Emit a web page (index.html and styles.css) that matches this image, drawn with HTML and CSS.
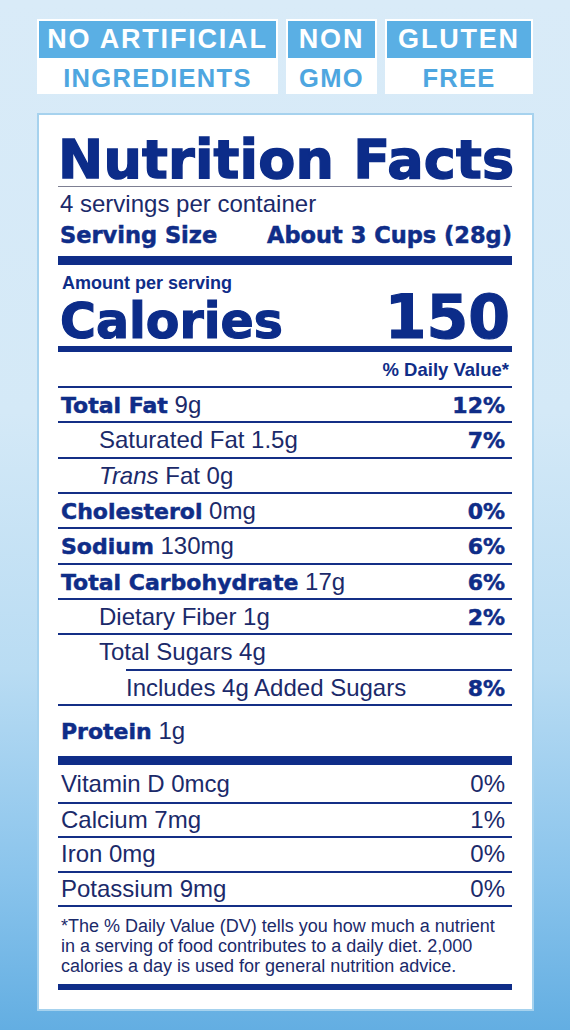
FILE: index.html
```html
<!DOCTYPE html>
<html lang="en">
<head>
<meta charset="utf-8">
<title>Nutrition Facts</title>
<link rel="stylesheet" href="styles.css">
</head>
<body>
<div class="page">
  <div class="badges">
    <div class="badge b1"><div class="b-top">NO ARTIFICIAL</div><div class="b-bot">INGREDIENTS</div></div>
    <div class="badge b2"><div class="b-top">NON</div><div class="b-bot">GMO</div></div>
    <div class="badge b3"><div class="b-top">GLUTEN</div><div class="b-bot">FREE</div></div>
  </div>

  <div class="card">
    <div class="title">Nutrition Facts</div>
    <div class="rule-thin"></div>
    <div class="servings">4 servings per container</div>
    <div class="serving-size"><span>Serving Size</span><span>About 3 Cups (28g)</span></div>
    <div class="bar bar-9"></div>
    <div class="amount">Amount per serving</div>
    <div class="calories"><span class="cal-lbl">Calories</span><span class="cal-num">150</span></div>
    <div class="bar bar-6"></div>
    <div class="dv">% Daily Value*</div>

    <div class="row"><span><b>Total Fat</b> 9g</span><b>12%</b></div>
    <div class="row sub"><span>Saturated Fat 1.5g</span><b>7%</b></div>
    <div class="row sub"><span><i>Trans</i> Fat 0g</span></div>
    <div class="row"><span><b>Cholesterol</b> 0mg</span><b>0%</b></div>
    <div class="row"><span><b>Sodium</b> 130mg</span><b>6%</b></div>
    <div class="row"><span><b>Total Carbohydrate</b> 17g</span><b>6%</b></div>
    <div class="row sub"><span>Dietary Fiber 1g</span><b>2%</b></div>
    <div class="row sub"><span>Total Sugars 4g</span></div>
    <div class="row sub2"><span>Includes 4g Added Sugars</span><b>8%</b></div>
    <div class="row protein"><span><b>Protein</b> 1g</span></div>
    <div class="bar bar-9 after-protein"></div>

    <div class="vrow first"><span>Vitamin D 0mcg</span><span>0%</span></div>
    <div class="vrow"><span>Calcium 7mg</span><span>1%</span></div>
    <div class="vrow"><span>Iron 0mg</span><span>0%</span></div>
    <div class="vrow"><span>Potassium 9mg</span><span>0%</span></div>

    <p class="foot">*The % Daily Value (DV) tells you how much a nutrient<br>in a serving of food contributes to a daily diet. 2,000<br>calories a day is used for general nutrition advice.</p>
    <div class="bar bar-6 last"></div>
  </div>
</div>
</body>
</html>
```

FILE: styles.css
```css
html, body {
  margin: 0;
  padding: 0;
}
body {
  width: 570px;
  height: 1030px;
  overflow: hidden;
  background: linear-gradient(to bottom, #d9ebf8 0%, #d4e9f7 40%, #b9dcf3 65%, #8ac4ec 85%, #63aee2 100%);
  font-family: "Liberation Sans", Arial, sans-serif;
}
.page {
  padding: 19px 0 0 37px;
}

/* Badges */
.badges {
  display: flex;
  gap: 8px;
}
.badge {
  background: #ffffff;
  padding: 2px 2px 1px;
  font-family: "Liberation Sans", Arial, sans-serif;
  font-weight: 700;
  text-align: center;
}
.b1 { width: 237px; }
.b2 { width: 87px; }
.b3 { width: 144px; }
.b-top {
  background: #5aafe4;
  color: #ffffff;
  height: 37px;
  line-height: 36px;
  font-size: 27px;
  letter-spacing: 1.8px;
  white-space: nowrap;
}
.b-bot {
  color: #4ea6e0;
  height: 30px;
  padding-top: 5px;
  line-height: 30px;
  font-size: 25.5px;
  letter-spacing: 1.3px;
  white-space: nowrap;
}

/* Card */
.card {
  margin-top: 19px;
  width: 454px;
  border: 2px solid #a6d2ee;
  background: #ffffff;
  padding: 19px 20px 19px 19px;
  color: #142f86;
}
.title {
  font-family: "DejaVu Sans", sans-serif;
  font-weight: 700;
  font-size: 54px;
  line-height: 52px;
  letter-spacing: 0.2px;
  color: #0c2c89;
  -webkit-text-stroke: 1.4px #0c2c89;
  white-space: nowrap;
}
.rule-thin {
  height: 1px;
  background: #7d7f92;
}
.servings {
  margin-top: 4px;
  font-size: 24px;
  line-height: 26px;
  color: #1b2a6a;
  padding-left: 2px;
}
.serving-size {
  margin-top: 5px;
  display: flex;
  justify-content: space-between;
  font-family: "DejaVu Sans", sans-serif;
  font-weight: 700;
  font-size: 22.5px;
  line-height: 26px;
  padding-left: 2px;
  color: #0f2d88;
  -webkit-text-stroke: 0.5px #0f2d88;
}
.bar {
  background: #0f2d88;
}
.bar-9 { height: 9px; margin-top: 8px; }
.bar-6 { height: 6px; }
.amount {
  margin-top: 8px;
  font-weight: 700;
  font-size: 18px;
  line-height: 20px;
  padding-left: 4px;
  color: #0f2d88;
}
.calories {
  display: flex;
  justify-content: space-between;
  align-items: baseline;
  font-family: "DejaVu Sans", sans-serif;
  font-weight: 700;
  color: #0c2c89;
  -webkit-text-stroke: 1.2px #0c2c89;
  padding: 0 2px 0 2px;
}
.cal-lbl {
  font-size: 49px;
  line-height: 48px;
}
.cal-num {
  font-size: 60px;
  line-height: 48px;
}
.dv {
  margin-top: 7px;
  padding: 0 3px 5px 0;
  text-align: right;
  font-weight: 700;
  font-size: 18.5px;
  line-height: 22px;
  color: #0f2d88;
}

/* Nutrient rows */
.row {
  display: flex;
  justify-content: space-between;
  align-items: baseline;
  border-top: 2px solid #142f86;
  padding: 1px 7px 0 3px;
  height: 32.33px;
  line-height: 32.33px;
  font-size: 24px;
  color: #1b2a6a;
  white-space: nowrap;
}
.row b {
  font-family: "DejaVu Sans", sans-serif;
  font-weight: 700;
  font-size: 22px;
  color: #0f2d88;
  -webkit-text-stroke: 0.5px #0f2d88;
}
.row i {
  font-style: italic;
}
.row.sub {
  padding-left: 41px;
}
.row.sub2 {
  margin-left: 68px;
  padding-left: 0;
}
.row.protein {
  padding-top: 0;
  height: 50px;
  line-height: 50px;
}
.bar-9.after-protein {
  margin-top: 0;
}

/* Vitamin rows */
.vrow {
  display: flex;
  justify-content: space-between;
  border-bottom: 2px solid #142f86;
  padding: 0 7px 0 3px;
  font-size: 24px;
  height: 32.5px;
  line-height: 32.5px;
  color: #1b2a6a;
  white-space: nowrap;
}
.vrow.first {
  padding-top: 1px;
  height: 36px;
  line-height: 36px;
}

.foot {
  margin: 0;
  padding: 9px 0 0 3px;
  font-size: 18px;
  line-height: 20px;
  color: #1b2a6a;
  white-space: nowrap;
}
.bar-6.last {
  margin-top: 8px;
}
```
